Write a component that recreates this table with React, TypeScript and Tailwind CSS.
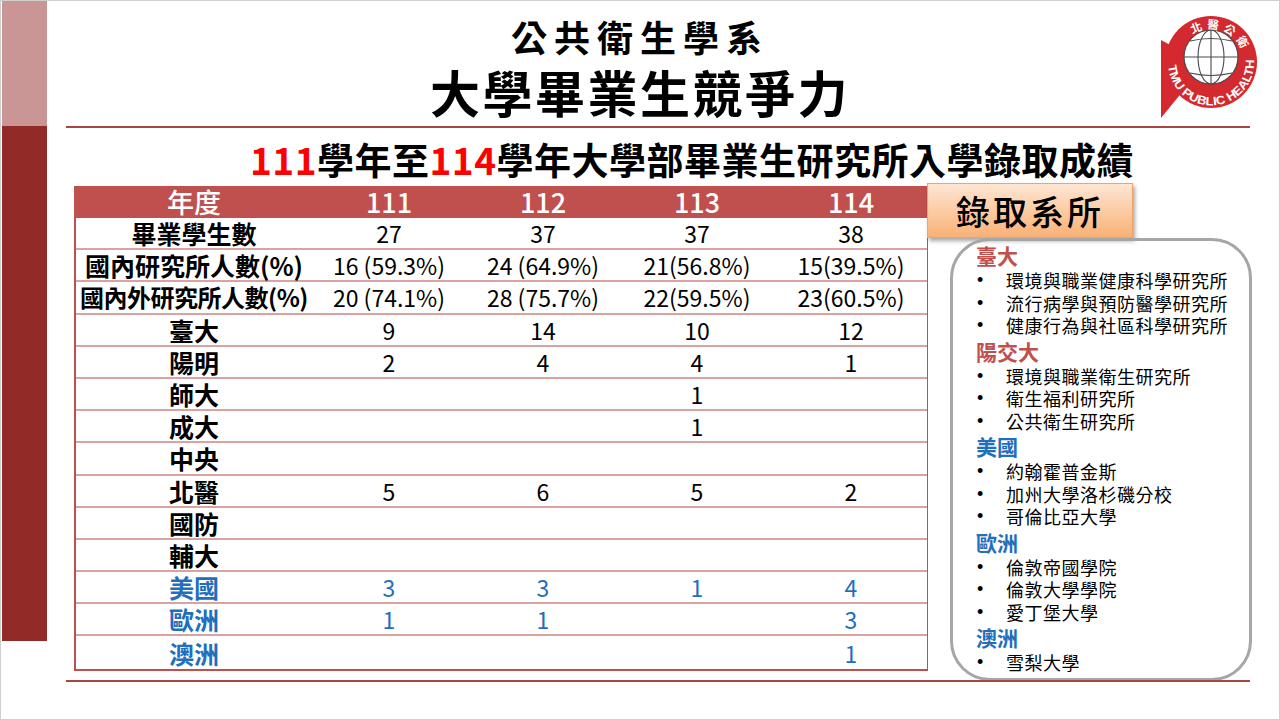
import React from "react";

type Row = { label: string; values: string[]; blue?: boolean; small?: boolean };

const rows: Row[] = [
  { label: "畢業學生數", values: ["27", "37", "37", "38"] },
  { label: "國內研究所人數(%)", values: ["16 (59.3%)", "24 (64.9%)", "21(56.8%)", "15(39.5%)"] },
  { label: "國內外研究所人數(%)", values: ["20 (74.1%)", "28 (75.7%)", "22(59.5%)", "23(60.5%)"], small: true },
  { label: "臺大", values: ["9", "14", "10", "12"] },
  { label: "陽明", values: ["2", "4", "4", "1"] },
  { label: "師大", values: ["", "", "1", ""] },
  { label: "成大", values: ["", "", "1", ""] },
  { label: "中央", values: ["", "", "", ""] },
  { label: "北醫", values: ["5", "6", "5", "2"] },
  { label: "國防", values: ["", "", "", ""] },
  { label: "輔大", values: ["", "", "", ""] },
  { label: "美國", values: ["3", "3", "1", "4"], blue: true },
  { label: "歐洲", values: ["1", "1", "", "3"], blue: true },
  { label: "澳洲", values: ["", "", "", "1"], blue: true },
];

const schools = [
  { name: "臺大", red: true, items: ["環境與職業健康科學研究所", "流行病學與預防醫學研究所", "健康行為與社區科學研究所"] },
  { name: "陽交大", red: true, items: ["環境與職業衛生研究所", "衛生福利研究所", "公共衛生研究所"] },
  { name: "美國", red: false, items: ["約翰霍普金斯", "加州大學洛杉磯分校", "哥倫比亞大學"] },
  { name: "歐洲", red: false, items: ["倫敦帝國學院", "倫敦大學學院", "愛丁堡大學"] },
  { name: "澳洲", red: false, items: ["雪梨大學"] },
];

function Logo() {
  return (
    <svg viewBox="0 0 100 112" className="w-[100px] h-[112px]">
      <defs>
        <path id="topArc" d="M 35.5 25.4 A 33 33 0 0 1 83 42.7" />
        <path id="bottomArc" d="M 9.2 57.7 A 43 43 0 1 0 94.6 48" />
      </defs>
      <polygon points="2,32 46,56 2,110" fill="#d42a2f" />
      <circle cx="52" cy="54" r="46" fill="#d42a2f" />
      <circle cx="52" cy="49" r="27" fill="#ffffff" stroke="#4a4a4a" strokeWidth="1.2" />
      <ellipse cx="52" cy="49" rx="13" ry="27" fill="none" stroke="#4a4a4a" strokeWidth="1.1" />
      <line x1="52" y1="22" x2="52" y2="76" stroke="#4a4a4a" strokeWidth="1.1" />
      <line x1="25" y1="49" x2="79" y2="49" stroke="#4a4a4a" strokeWidth="1.1" />
      <path d="M 31 33 Q 52 28 73 33" fill="none" stroke="#4a4a4a" strokeWidth="1.1" />
      <path d="M 31 65 Q 52 70 73 65" fill="none" stroke="#4a4a4a" strokeWidth="1.1" />
      <text fill="#ffffff" fontSize="11.5" fontWeight="700" fontFamily="'Noto Sans CJK TC', sans-serif">
        <textPath href="#topArc" startOffset="50%" textAnchor="middle" letterSpacing="4">
          北醫公衛
        </textPath>
      </text>
      <text fill="#ffffff" fontSize="12" fontWeight="700" fontFamily="'Liberation Sans', sans-serif">
        <textPath href="#bottomArc" textLength="134" lengthAdjust="spacingAndGlyphs">
          TMU PUBLIC HEALTH
        </textPath>
      </text>
    </svg>
  );
}

export default function App() {
  return (
    <div className="w-[1280px] h-[720px] border border-[#cfcfcf] bg-white flex overflow-hidden font-['Noto_Sans_CJK_TC',sans-serif] text-black">
      {/* left bar */}
      <div className="w-[45px] ml-[1px] flex flex-col shrink-0">
        <div className="h-[125px] bg-[#c99695]" />
        <div className="h-[515px] bg-[#922a28]" />
      </div>

      <div className="flex-1 flex flex-col relative">
        {/* header */}
        <div className="h-[125px] flex flex-col items-center pr-[46px] pt-[14px]">
          <h2 className="text-[36px] leading-[42px] font-bold tracking-[7px]">公共衛生學系</h2>
          <h1 className="text-[50px] leading-[56px] font-bold tracking-[2.5px] mt-[6px]">大學畢業生競爭力</h1>
        </div>
        <div className="absolute right-[20px] top-[7px]">
          <Logo />
        </div>
        <div className="ml-[19px] w-[1184px] h-[2px] bg-[#a84644]" />

        {/* subtitle */}
        <div className="h-[58px] flex items-center justify-center pl-[58px] pt-[4px]">
          <p className="text-[37px] leading-[44px] font-bold tracking-[0.5px]">
            <span className="text-[#ff0000]">111</span>學年至<span className="text-[#ff0000]">114</span>學年大學部畢業生研究所入學錄取成績
          </p>
        </div>

        {/* body */}
        <div className="h-[494px] flex items-start ml-[27px]">
          <div className="w-[854px] border-l-2 border-r border-b-2 border-[#c0504d]">
            <div className="grid grid-cols-[236px_repeat(4,154px)] h-[32px] items-center bg-[#c0504d] text-white text-[27px] leading-[28px] font-medium">
              <div className="text-center">年度</div>
              <div className="text-center">111</div>
              <div className="text-center">112</div>
              <div className="text-center">113</div>
              <div className="text-center">114</div>
            </div>
            {rows.map((row, i) => (
              <div
                key={row.label}
                className={`grid grid-cols-[236px_repeat(4,154px)] h-[32.2px] items-center ${
                  i < rows.length - 1 ? "border-b-2 border-[#d9a3a1]" : ""
                } ${row.blue ? "text-[#1f6fbd]" : "text-black"}`}
              >
                <div
                  className={`text-center font-bold whitespace-nowrap ${
                    row.small ? "text-[24px] tracking-[-0.5px]" : "text-[25px]"
                  } leading-[28px]`}
                >
                  {row.label}
                </div>
                {row.values.map((v, j) => (
                  <div key={j} className="text-center text-[23px] leading-[28px] whitespace-nowrap">
                    {v}
                  </div>
                ))}
              </div>
            ))}
          </div>

          {/* right panel */}
          <div className="w-[325px] -mt-[3px] -ml-[1px] flex flex-col">
            <div className="w-[206px] h-[55px] border border-[#f2a466] bg-linear-to-b from-[#fde6d2] to-[#f9b175] shadow-[2px_3px_4px_rgba(0,0,0,0.35)] flex items-center justify-center text-[34px] leading-[40px] font-medium tracking-[3px]">
              錄取系所
            </div>
            <div className="ml-[23px] w-[302px] h-[443px] border-[3px] border-[#a6a6a6] rounded-[40px] pl-[23px]">
              {schools.map((s) => (
                <div key={s.name}>
                  <div
                    className={`text-[21px] leading-[28px] font-bold ${
                      s.red ? "text-[#c0504d]" : "text-[#1f6fbd]"
                    }`}
                  >
                    {s.name}
                  </div>
                  {s.items.map((it) => (
                    <div key={it} className="flex text-[18px] leading-[22.5px] tracking-[0.5px]">
                      <span className="w-[30px] pl-[1px] font-['Liberation_Sans',sans-serif] text-[18px]">•</span>
                      <span>{it}</span>
                    </div>
                  ))}
                </div>
              ))}
            </div>
          </div>
        </div>
        <div className="ml-[19px] w-[1184px] h-[2px] bg-[#a84644]" />
      </div>
    </div>
  );
}
